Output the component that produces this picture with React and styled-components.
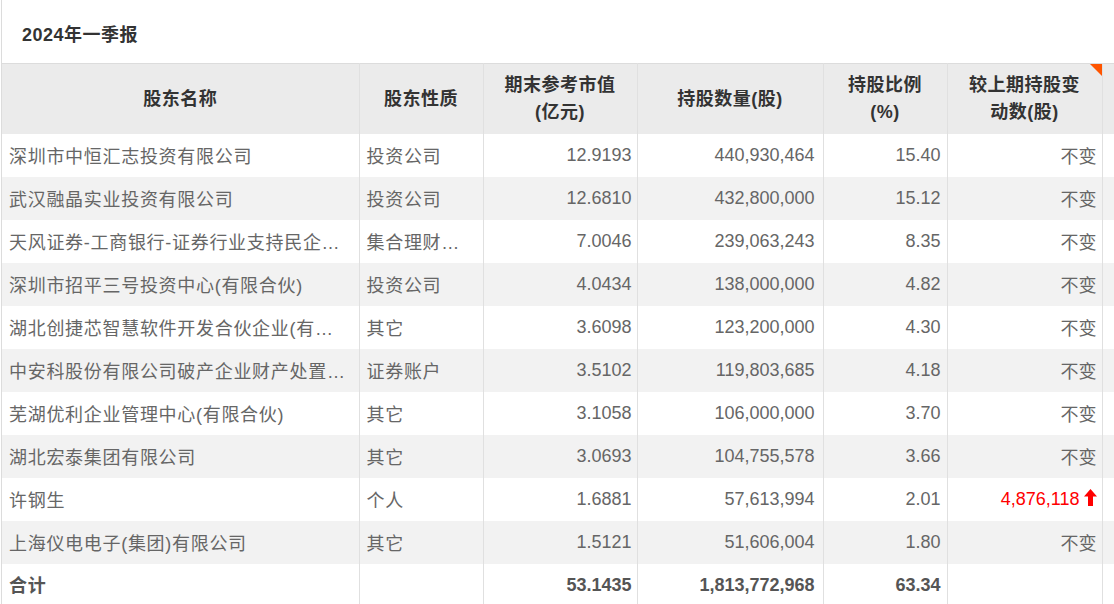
import React from "react";
import styled, { createGlobalStyle } from "styled-components";

const Global = createGlobalStyle`
  html, body { margin: 0; padding: 0; background: #fff; }
  body { font-family: "Liberation Sans", Arial, "Noto Sans CJK SC", sans-serif; }
`;

const Wrapper = styled.div`
  margin-left: 1px;
  border-left: 1px solid #dcdcdc;
  width: 1113px;
  height: 604px;
  overflow: hidden;
`;

const Title = styled.div`
  height: 63px;
  box-sizing: border-box;
  padding: 22px 0 0 20px;
  font-size: 18px;
  font-weight: bold;
  color: #333;
  line-height: 26px;
  letter-spacing: 0.5px;
`;

const Table = styled.table`
  border-collapse: collapse;
  table-layout: fixed;
  width: 1125px;
  font-size: 18px;
  color: #666;
`;

const HeadRow = styled.tr`
  background: #ebebeb;
  border-top: 1px solid #dcdcdc;
`;

const Th = styled.th`
  position: relative;
  height: 70px;
  padding: 0 4px;
  font-weight: bold;
  color: #333;
  line-height: 27px;
  letter-spacing: 0.5px;
  text-align: center;
  border-left: 1px solid #e0e0e0;
  &:first-child { border-left: none; }
`;

const Corner = styled.span`
  position: absolute;
  top: 0;
  right: 0;
  width: 0;
  height: 0;
  border-top: 12px solid #ff5500;
  border-left: 12px solid transparent;
`;

const Row = styled.tr`
  background: ${(p) => (p.$alt ? "#f2f2f2" : "#fff")};
`;

const Td = styled.td`
  height: ${(p) => (p.$text ? 41 : 43)}px;
  padding: 0 ${(p) => (p.$pr ? p.$pr : 8)}px ${(p) => (p.$text ? 2 : 0)}px 7px;
  text-align: ${(p) => (p.$right ? "right" : "left")};
  white-space: nowrap;
  overflow: hidden;
  text-overflow: ellipsis;
  letter-spacing: ${(p) => (p.$text && !p.$right ? "0.7px" : "normal")};
  border-left: 1px solid #e0e0e0;
  font-weight: ${(p) => (p.$bold ? "bold" : "normal")};
  color: ${(p) => (p.$red ? "#ff0000" : p.$bold ? "#555" : "#666")};
  &:first-child { border-left: none; }
`;

const TotalTd = styled(Td)`
  height: 40px;
`;

const Up = styled.svg`
  vertical-align: -1px;
  margin-left: 4px;
`;

const UpArrow = () => (
  <Up width="13" height="17" viewBox="0 0 13 17">
    <path d="M6.5 0 L13 7.5 L9 7.5 L9 17 L4 17 L4 7.5 L0 7.5 Z" fill="#ff0000" />
  </Up>
);

const rows = [
  ["深圳市中恒汇志投资有限公司", "投资公司", "12.9193", "440,930,464", "15.40", "不变"],
  ["武汉融晶实业投资有限公司", "投资公司", "12.6810", "432,800,000", "15.12", "不变"],
  ["天风证券-工商银行-证券行业支持民企发展系列之天风证券3号集合资产管理计划", "集合理财计划", "7.0046", "239,063,243", "8.35", "不变"],
  ["深圳市招平三号投资中心(有限合伙)", "投资公司", "4.0434", "138,000,000", "4.82", "不变"],
  ["湖北创捷芯智慧软件开发合伙企业(有限合伙)", "其它", "3.6098", "123,200,000", "4.30", "不变"],
  ["中安科股份有限公司破产企业财产处置专用账户", "证券账户", "3.5102", "119,803,685", "4.18", "不变"],
  ["芜湖优利企业管理中心(有限合伙)", "其它", "3.1058", "106,000,000", "3.70", "不变"],
  ["湖北宏泰集团有限公司", "其它", "3.0693", "104,755,578", "3.66", "不变"],
  ["许钢生", "个人", "1.6881", "57,613,994", "2.01", "up:4,876,118"],
  ["上海仪电电子(集团)有限公司", "其它", "1.5121", "51,606,004", "1.80", "不变"],
];

const widths = [357, 124, 154, 186, 124, 155, 25];

export default function App() {
  return (
    <>
      <Global />
      <Wrapper>
        <Title>2024年一季报</Title>
        <Table>
          <colgroup>
            {widths.map((w, i) => (
              <col key={i} style={{ width: w }} />
            ))}
          </colgroup>
          <thead>
            <HeadRow>
              <Th>股东名称</Th>
              <Th>股东性质</Th>
              <Th>期末参考市值<br />(亿元)</Th>
              <Th>持股数量(股)</Th>
              <Th>持股比例<br />(%)</Th>
              <Th>较上期持股变<br />动数(股)<Corner /></Th>
              <Th />
            </HeadRow>
          </thead>
          <tbody>
            {rows.map((r, i) => {
              const up = r[5].startsWith("up:");
              return (
                <Row key={i} $alt={i % 2 === 1}>
                  <Td $text>{r[0]}</Td>
                  <Td $text>{r[1]}</Td>
                  <Td $right $pr={5}>{r[2]}</Td>
                  <Td $right>{r[3]}</Td>
                  <Td $right $pr={6}>{r[4]}</Td>
                  <Td $right $pr={5} $red={up} $text={!up}>
                    {up ? (
                      <>
                        {r[5].slice(3)}
                        <UpArrow />
                      </>
                    ) : (
                      r[5]
                    )}
                  </Td>
                  <Td />
                </Row>
              );
            })}
            <Row>
              <TotalTd $bold $text>合计</TotalTd>
              <TotalTd />
              <TotalTd $right $bold $pr={5}>53.1435</TotalTd>
              <TotalTd $right $bold>1,813,772,968</TotalTd>
              <TotalTd $right $bold $pr={6}>63.34</TotalTd>
              <TotalTd />
              <TotalTd />
            </Row>
          </tbody>
        </Table>
      </Wrapper>
    </>
  );
}
